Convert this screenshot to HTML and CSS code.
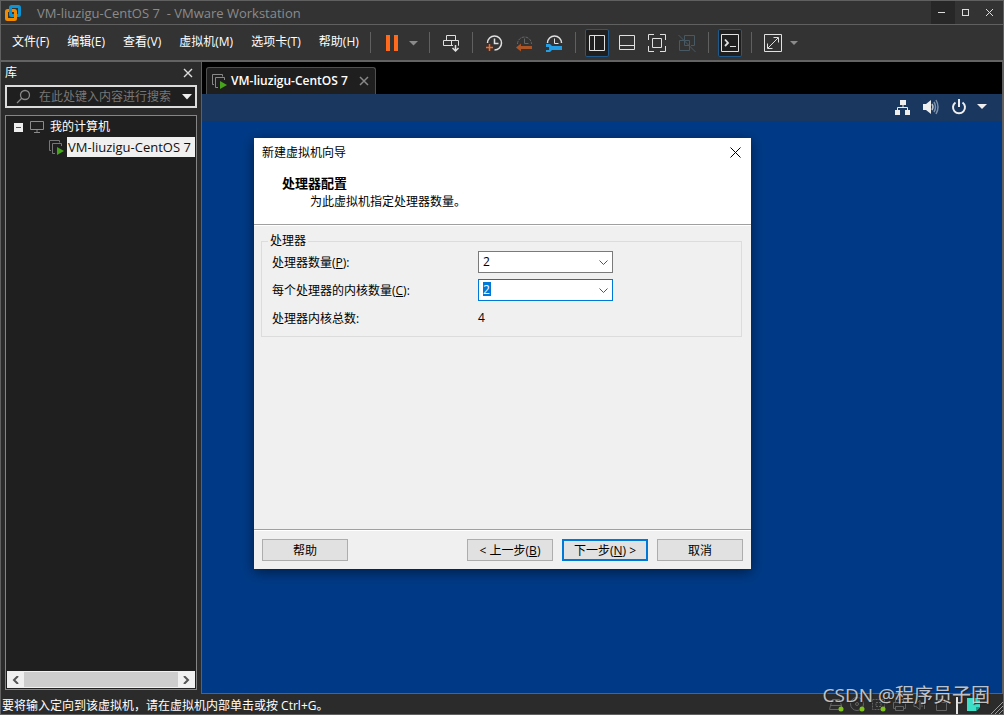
FILE: index.html
```html
<!DOCTYPE html>
<html lang="zh-CN">
<head>
<meta charset="utf-8">
<title>VM-liuzigu-CentOS 7 - VMware Workstation</title>
<link rel="stylesheet" href="styles.css">
</head>
<body>
<div class="window">
  <header class="titlebar">
    <svg class="logo" width="18" height="18" viewBox="0 0 18 18" fill="none" stroke-width="3"><rect x="6.500" y="2.500" width="9" height="9" rx="1" stroke="#0f93d2"/><rect x="2.500" y="6.500" width="9" height="9" rx="1" stroke="#f38b00"/><path d="M6.500 5v5.500" stroke="#0f93d2"/></svg>
    <h1 class="title">VM-liuzigu-CentOS 7&nbsp; - VMware Workstation</h1>
    <div class="caption-buttons">
      <button class="caption active" aria-label="最小化"><svg width="24" height="22" stroke="#ddd"><path d="M7 10.500h7"/></svg></button>
      <button class="caption" aria-label="最大化"><svg width="24" height="22" stroke="#ddd" fill="none"><rect x="7.500" y="7.500" width="6" height="6"/></svg></button>
      <button class="caption" aria-label="关闭"><svg width="24" height="22" stroke="#ddd"><path d="M7 7l7 7M14 7l-7 7"/></svg></button>
    </div>
  </header>

  <div class="menubar">
    <nav class="menus">
      <button>文件(F)</button><button>编辑(E)</button><button>查看(V)</button><button>虚拟机(M)</button><button>选项卡(T)</button><button>帮助(H)</button>
    </nav>
    <div class="toolbar">
      <span class="sep"></span>
      <button class="tool" aria-label="挂起"><svg viewBox="0 0 24 24"><path fill="#ff6a1c" d="M6 4h4v16H6zM14 4h4v16h-4z"/></svg></button>
      <button class="drop" aria-label="电源选项"><svg viewBox="0 0 13 24"><path fill="#8b8b8b" d="M2 10h9l-4.500 4.500z"/></svg></button>
      <span class="sep"></span>
      <button class="tool" aria-label="发送 Ctrl+Alt+Del"><svg viewBox="0 0 24 24"><path d="M7.500 4.500h9v5h-9zM4.500 9.500h15v5h-15zM12.500 9.500v5"/><path stroke="#333" stroke-width="5" d="M16.500 13v8"/><path d="M16.500 14v6M13.500 17l3 3 3-3" stroke-width="1.500"/></svg></button>
      <span class="sep"></span>
      <div class="tools">
        <button class="tool" aria-label="拍摄快照"><svg viewBox="0 0 24 24"><path d="M5.500 12A7 7 0 1 1 12.500 19" stroke-width="1.500"/><path d="M12.500 7.500v5h4" stroke-width="1.500"/><path stroke="#ff6a1c" stroke-width="1.500" d="M4 16.500h7M7.500 13v7"/></svg></button>
        <button class="tool" aria-label="恢复快照"><svg viewBox="0 0 24 24"><path stroke="#666" stroke-dasharray="3 1" d="M5.500 13A7 7 0 0 1 19.500 13"/><path stroke="#666" d="M12.500 7.500v5h4"/><path fill="#ad5427" d="M4 16.500l5-4V15h11v3H9v2.500z"/></svg></button>
        <button class="tool" aria-label="管理快照"><svg viewBox="0 0 24 24"><path d="M5.500 12A7 7 0 0 1 19.500 12" stroke-width="1.500"/><path d="M12.500 7.500v5h4"/><path fill="#249de3" d="M4 13h4l2 2h10v4H10l-2 2H4v-2h3v-3H4z"/></svg></button>
      </div>
      <span class="sep"></span>
      <div class="tools">
        <button class="tool on" aria-label="显示库"><svg viewBox="0 0 24 24"><path d="M4.500 4.500h15v15h-15zM9.500 4.500v15"/></svg></button>
        <button class="tool" aria-label="显示缩略图"><svg viewBox="0 0 24 24"><path d="M4.500 4.500h15v14h-15zM4.500 14.500h15"/></svg></button>
        <button class="tool" aria-label="全屏"><svg viewBox="0 0 24 24"><path d="M3.500 9V3.500H9M15 3.500h5.500V9M20.500 15v5.500H15M9 20.500H3.500V15M7.500 7.500h9v9h-9z"/></svg></button>
        <button class="tool" aria-label="Unity 模式"><svg viewBox="0 0 24 24"><path stroke="#485964" d="M9.500 9V4.500h10v10H16M9.500 9.500h-5v10h10v-5M9.500 9.500v5h5v-5zM3.500 4l17 17"/></svg></button>
      </div>
      <span class="sep"></span>
      <button class="tool on" aria-label="控制台视图"><svg viewBox="0 0 24 24"><path d="M3.500 3.500h17v17h-17z"/><path d="M7 8.500l3 3.500-3 3" stroke-width="1.800"/><path d="M12 15.500h6"/></svg></button>
      <span class="sep"></span>
      <button class="tool" aria-label="自由拉伸"><svg viewBox="0 0 24 24"><path d="M3.500 3.500h17v17h-17zM7 17l10-10M12.500 6.500h5v5M6.500 12.500v5h5"/></svg></button>
      <button class="drop" aria-label="拉伸选项"><svg viewBox="0 0 13 24"><path fill="#8b8b8b" d="M2 10h8l-4 4z"/></svg></button>
    </div>
  </div>

  <main class="main">
    <aside class="library">
      <div class="library-head"><h2>库</h2><button aria-label="关闭库"><svg width="10" height="10" stroke="#ddd" stroke-width="1.400"><path d="M1 1l8 8M9 1l-8 8"/></svg></button></div>
      <div class="search">
        <svg width="16" height="16" fill="none" stroke="#888" stroke-width="1.300"><circle cx="9" cy="6" r="4.500"/><path d="M6 9l-5 5"/></svg>
        <input type="text" aria-label="搜索" placeholder="在此处键入内容进行搜索">
        <button aria-label="搜索选项"><svg width="10" height="6"><path fill="#eee" d="M0 0h10L5 5.500z"/></svg></button>
      </div>
      <div class="tree-box">
        <ul class="tree">
          <li class="node"><svg width="9" height="9"><path fill="#eee" d="M0 0h9v9H0z"/><path stroke="#34539c" d="M2 4.500h5"/></svg><svg width="14" height="12" fill="none" stroke="#8b8b8b"><path d="M.500.500h13v8H.500zM4 11.500h6M7 9v2"/></svg><span>我的计算机</span></li>
          <li class="node child"><svg width="15" height="15" fill="none" stroke="#777"><path d="M.500 10.500V.500h10v2M2 10.500H.500M6 13.500H3.500v-10h9V6"/><path stroke="none" fill="#47a51b" d="M8 7l7 4-7 4z"/></svg><span class="selected">VM-liuzigu-CentOS 7</span></li>
        </ul>
        <div class="scrollbar">
          <button aria-label="向左滚动"><svg width="8" height="8" fill="none" stroke="#555" stroke-width="2"><path d="M6 0L2 4l4 4"/></svg></button>
          <span class="thumb"></span>
          <button aria-label="向右滚动"><svg width="8" height="8" fill="none" stroke="#555" stroke-width="2"><path d="M2 0l4 4-4 4"/></svg></button>
        </div>
      </div>
    </aside>

    <section class="console">
      <div class="tabs">
        <div class="tab"><svg width="15" height="15" fill="none" stroke="#888"><path d="M.500 10.500V.500h10v2M2 10.500H.500M6 13.500H3.500v-10h9V6"/><path stroke="none" fill="#47a51b" d="M8 7l7 4-7 4z"/></svg><span>VM-liuzigu-CentOS 7</span><button aria-label="关闭选项卡"><svg width="10" height="10" stroke="#888" stroke-width="1.500"><path d="M1 1l8 8M9 1l-8 8"/></svg></button></div>
      </div>
      <div class="guest">
        <div class="guest-bar">
          <svg width="16" height="16" fill="#eee"><path d="M5 1h6v5H5zM0 11h5v5H0zM10 11h5v5h-5z"/><path fill="none" stroke="#eee" d="M8 6v3M2.500 11V8.500h10V11"/></svg>
          <svg width="16" height="16" fill="none"><path fill="#eee" d="M0 5h3l5-4v14l-5-4H0z"/><path stroke="#bcc6d1" stroke-width="1.500" d="M9 5q2 3 0 6"/><path stroke="#7d90a8" stroke-width="1.500" d="M11 3q3 5 0 10M13 1q4 7 0 14"/></svg>
          <svg width="16" height="16" fill="none" stroke="#eee" stroke-width="2"><path d="M4.500 3.500a6 6 0 1 0 7 0M8 0v8"/></svg>
          <svg class="tray-caret" width="10" height="6"><path fill="#eee" d="M0 0h10L5 5z"/></svg>
        </div>
      </div>
    </section>
  </main>

  <footer class="status">
    <span>要将输入定向到该虚拟机，请在虚拟机内部单击或按 Ctrl+G。</span>
    <div class="devices">
      <svg viewBox="0 0 17 16"><path d="M2.500 8.500l2-6h7l2 6v4h-12zM2 8.500h12"/><circle class="lit" cx="13" cy="12" r="2.500"/></svg>
      <svg viewBox="0 0 17 16"><circle cx="8" cy="7" r="6.500"/><circle cx="8" cy="7" r="1.500"/><circle class="lit" cx="13" cy="12" r="2.500"/></svg>
      <svg viewBox="0 0 17 16"><path stroke-dasharray="2 1" d="M2.500 2.500h12v10h-12zM6 5.500h5v4H6z"/><circle class="lit" cx="13" cy="12" r="2.500"/></svg>
      <svg viewBox="0 0 17 16"><path d="M4.500 6V2.500h8V6M4 11.500H2.500v-6h12v6H13M4.500 9.500h8v4h-8z"/></svg>
      <svg viewBox="0 0 17 16"><path d="M2 6.500h2l4-3v9l-4-3H2zM10 5v5M12.500 3v9"/></svg>
      <svg viewBox="0 0 17 16"><path d="M3.500 5.500h10v8h-10zM5.500 5V2.500h6V5"/></svg>
      <span class="divider"></span>
      <svg viewBox="0 0 17 16"><path stroke="none" fill="#3de0c6" d="M3 1h13v9l-4 4H3z"/><path stroke="none" fill="#1b9c8b" d="M16 10h-4v4z"/></svg>
    </div>
    <svg class="grip" width="13" height="13" stroke="#999"><path d="M1 13L13 1M5 13l8-8M9 13l4-4"/></svg>
  </footer>

  <form class="dialog" role="dialog" aria-labelledby="wizard-title">
    <div class="dialog-head">
      <div class="dialog-title"><span id="wizard-title">新建虚拟机向导</span><button type="button" aria-label="关闭"><svg width="11" height="11" stroke="#000"><path d="M.500.500l10 10M10.500.500l-10 10"/></svg></button></div>
      <h2>处理器配置</h2>
      <p>为此虚拟机指定处理器数量。</p>
    </div>
    <div class="dialog-body">
      <fieldset>
        <legend>处理器</legend>
        <label for="cpus">处理器数量(<u>P</u>):</label>
        <span class="combo"><select id="cpus"><option>1</option><option selected>2</option><option>4</option></select><svg width="9" height="5" fill="none" stroke="#555"><path d="M.500.500l4 4 4-4"/></svg></span>
        <label for="cores">每个处理器的内核数量(<u>C</u>):</label>
        <span class="combo focused"><select id="cores"><option>1</option><option selected>2</option><option>4</option></select><svg width="9" height="5" fill="none" stroke="#555"><path d="M.500.500l4 4 4-4"/></svg></span>
        <label for="total">处理器内核总数:</label>
        <output id="total">4</output>
      </fieldset>
    </div>
    <div class="dialog-foot">
      <button type="button">帮助</button>
      <button type="button" class="back">&lt; 上一步(<u>B</u>)</button>
      <button type="button" class="primary">下一步(<u>N</u>) &gt;</button>
      <button type="button">取消</button>
    </div>
  </form>

  <div class="watermark">CSDN @程序员子固</div>
</div>
</body>
</html>
```
FILE: styles.css
```css
* { box-sizing: border-box; }
body { margin: 0; font: 12px/16px "Open Sans", "Noto Sans CJK SC", sans-serif; color: #fff; background: #333; }
button, input, select { font: inherit; color: inherit; }
button { padding: 0; border: 0; background: none; white-space: nowrap; }
svg { display: block; flex: none; }
h1, h2, p, ul { margin: 0; padding: 0; font-size: inherit; font-weight: normal; }
ul { list-style: none; }

.window { position: relative; display: flex; flex-direction: column; height: 100vh; border: 1px solid #606060; overflow: hidden; background: #2b2b2b; }

.titlebar { display: flex; align-items: center; height: 24px; flex: none; padding-left: 3px; background: #333; border-bottom: 1px solid #606060; }
.title { flex: 1; margin-left: 15px; font-size: 13px; color: #8b8b8b; }
.caption-buttons { display: flex; height: 23px; }
.caption { width: 24px; }
.caption.active { background: #272727; }

.menubar { display: flex; height: 37px; flex: none; background: #333; border-bottom: 2px solid #636363; }
.menus { display: flex; align-items: center; gap: 2px; min-width: 369px; padding: 0 0 2px 3px; }
.menus button { padding: 0 8px; }
.toolbar { display: flex; align-items: center; }
.tools { display: flex; gap: 6px; }
.sep { width: 1px; height: 21px; margin: 0 9px; background: #606060; }
.toolbar .sep:first-child { margin-left: 0; }
.tool { display: grid; place-items: center; width: 24px; height: 28px; border-radius: 2px; }
.tool svg { width: 24px; height: 24px; fill: none; stroke: #e0e0e0; }
.tool path[fill], .drop path { stroke: none; }
.tool.on { background: #1f1f1f; box-shadow: inset 0 0 0 1px #21598a; }
.drop { width: 13px; height: 24px; margin-left: 3px; }

.main { display: flex; flex: 1; min-height: 0; }
.library { display: flex; flex-direction: column; width: 200px; flex: none; padding: 0 4px 4px 4px; }
.library-head { display: flex; align-items: center; justify-content: space-between; height: 23px; flex: none; padding: 0 4px 2px 0; }
.search { display: flex; align-items: center; height: 23px; flex: none; padding: 0 3px 0 9px; border: 2px solid #dcdcdc; background: #1f1f1f; }
.search input { flex: 1; min-width: 0; margin-left: 5px; padding: 0 2px; border: 0; outline: 0; background: none; }
.search input::placeholder { color: #777; opacity: 1; }
.tree-box { display: flex; flex-direction: column; flex: 1; margin-top: 7px; border: 1px solid #858585; background: #1f1f1f; }
.tree { flex: 1; padding-top: 1px; }
.node { display: flex; align-items: center; height: 20px; padding-left: 8px; }
.node svg + svg { margin-left: 7px; }
.node span { margin-left: 6px; }
.node.child { padding-left: 43px; }
.node.child .selected { flex: 1; margin: 0 1px 0 3px; padding-left: 1px; font-size: 13px; line-height: 20px; white-space: nowrap; color: #111; background: #f0f0f0; }
.scrollbar { display: flex; height: 17px; margin: 0 1px 1px; border: 1px solid #f0f0f0; background: #f0f0f0; }
.scrollbar button { display: grid; place-items: center; width: 16px; }
.thumb { flex: 1; background: #cdcdcd; }

.console { display: flex; flex-direction: column; flex: 1; min-width: 0; border: solid #606060; border-width: 0 1px 1px; }
.tabs { display: flex; align-items: flex-end; height: 32px; flex: none; padding-left: 4px; background: #000; }
.tab { display: flex; align-items: center; height: 27px; padding: 0 6px 0 5px; border: 1px solid #505050; border-bottom: 0; border-radius: 3px 3px 0 0; background: #1f1f1f; font-weight: 600; }
.tab span { margin: 0 11px 0 4px; }
.guest { flex: 1; background: #003a86; }
.guest-bar { display: flex; align-items: center; justify-content: flex-end; gap: 12px; height: 27px; padding: 0 15px 1px 0; background: #19375f; }
.tray-caret { margin-left: -2px; }

.status { display: flex; align-items: center; height: 20px; flex: none; padding-left: 1px; background: #2b2b2b; }
.status > span { padding-top: 4px; }
.devices { display: flex; align-items: center; gap: 4px; margin-left: auto; padding-top: 2px; }
.devices svg { width: 17px; height: 16px; fill: none; stroke: #646464; }
.devices .lit { fill: #7fc31c; stroke: none; }
.divider { width: 2px; height: 17px; margin: 0 2px; background: #e6e6e6; }
.grip { align-self: flex-end; margin-left: 9px; }

.dialog { position: absolute; left: 253px; top: 137px; display: flex; flex-direction: column; width: 497px; height: 431px; color: #000; background: #f0f0f0; box-shadow: 0 3px 12px rgba(0, 0, 0, .5); }
.dialog-head { height: 88px; flex: none; background: #fff; border-bottom: 1px solid #fff; box-shadow: inset 0 -1px #a0a0a0; }
.dialog-title { display: flex; align-items: center; justify-content: space-between; height: 29px; padding: 0 10px 0 8px; }
.dialog-head h2 { margin: 8px 0 0 28px; font-size: 13px; font-weight: bold; }
.dialog-head p { margin: 3px 0 0 56px; }
.dialog-body { flex: 1; padding: 7px 9px 0 7px; }
fieldset { display: grid; grid-template-columns: 206px 135px; grid-auto-rows: 22px; align-items: center; row-gap: 6px; margin: 0; padding: 2px 10px 7px; border: 1px solid #dcdcdc; }
fieldset label { padding-top: 2px; }
legend { margin-left: -4px; padding: 0 2px; }
.combo { position: relative; display: block; height: 22px; }
.combo select { display: block; width: 100%; height: 100%; padding: 0 20px 0 4px; border: 1px solid #7a7a7a; border-radius: 0; background: #fff; appearance: none; }
.combo svg { position: absolute; right: 5px; top: 9px; pointer-events: none; }
.combo.focused select { border-color: #0078d7; color: #fff; background: linear-gradient(#0078d7, #0078d7) 4px 2px / 8px 14px no-repeat #fff; }
.combo option { color: #000; }
.dialog-foot { display: flex; gap: 9px; padding: 9px 8px 8px; border-top: 1px solid #a0a0a0; box-shadow: inset 0 1px #fff; }
.dialog-foot button { width: 86px; height: 22px; padding-top: 2px; border: 1px solid #adadad; background: #e1e1e1; }
.dialog-foot .back { margin-left: auto; }
.dialog-foot .primary { border: 2px solid #0078d7; }

.watermark { position: absolute; right: 13px; bottom: 6px; font-size: 19px; line-height: 26px; color: rgba(235, 235, 235, .8); text-shadow: 1px 1px 1px #222; white-space: nowrap; pointer-events: none; }
```
